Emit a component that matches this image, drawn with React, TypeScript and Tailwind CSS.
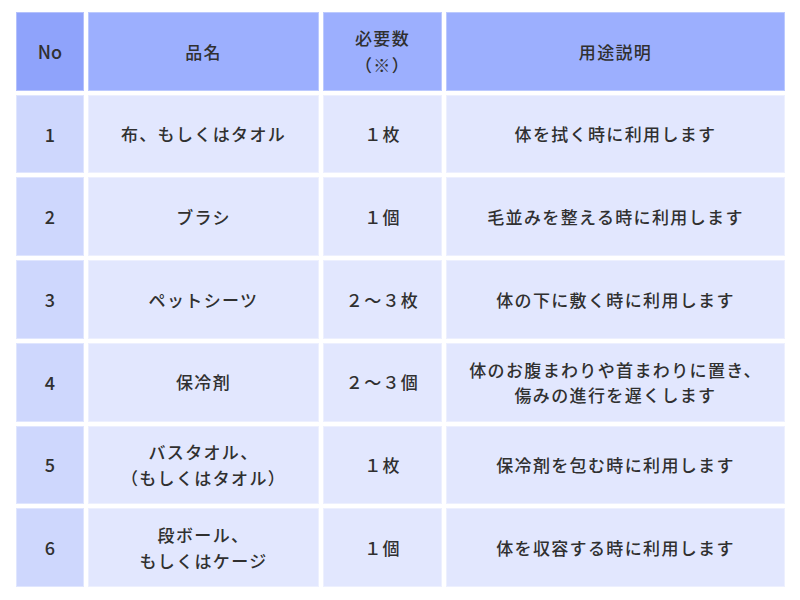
import React from "react";

const rows: { no: string; name: string[]; qty: string; use: string[] }[] = [
  { no: "1", name: ["布、もしくはタオル"], qty: "１枚", use: ["体を拭く時に利用します"] },
  { no: "2", name: ["ブラシ"], qty: "１個", use: ["毛並みを整える時に利用します"] },
  { no: "3", name: ["ペットシーツ"], qty: "２〜３枚", use: ["体の下に敷く時に利用します"] },
  { no: "4", name: ["保冷剤"], qty: "２〜３個", use: ["体のお腹まわりや首まわりに置き、", "傷みの進行を遅くします"] },
  { no: "5", name: ["バスタオル、", "（もしくはタオル）"], qty: "１枚", use: ["保冷剤を包む時に利用します"] },
  { no: "6", name: ["段ボール、", "もしくはケージ"], qty: "１個", use: ["体を収容する時に利用します"] },
];

function Lines({ lines }: { lines: string[] }) {
  return (
    <div className="text-center">
      {lines.map((l, i) => (
        <div key={i}>{l}</div>
      ))}
    </div>
  );
}

export default function App() {
  const cell = "flex items-center justify-center";
  return (
    <div
      className="w-[800px] h-[600px] bg-white pt-[12px] pl-[16px] text-[#303030] text-[17px] leading-[1.5] tracking-[0.08em] font-medium"
      style={{ fontFamily: '"Noto Sans CJK JP", "Noto Sans", sans-serif' }}
    >
      <div className="grid w-[769px] h-[575px] grid-cols-[68px_231px_119px_339px] grid-rows-[repeat(7,1fr)] gap-[4px]">
        <div className={`${cell} bg-[#8fa3fb] border border-[#b4c1fc] text-[18px] tracking-normal`}>No</div>
        <div className={`${cell} bg-[#9caffe] border border-[#bccafe]`}>品名</div>
        <div className={`${cell} bg-[#9caffe] border border-[#bccafe]`}>
          <div className="text-center leading-[1.6]">
            <div>必要数</div>
            <div>（※）</div>
          </div>
        </div>
        <div className={`${cell} bg-[#9caffe] border border-[#bccafe]`}>用途説明</div>
        {rows.map((r) => (
          <React.Fragment key={r.no}>
            <div className={`${cell} bg-[#ced7fd] border border-[#e0e6fe] text-[18px] tracking-normal`}>{r.no}</div>
            <div className={`${cell} bg-[#e2e7fe] border border-[#edf0fe]`}>
              <Lines lines={r.name} />
            </div>
            <div className={`${cell} bg-[#e2e7fe] border border-[#edf0fe]`}>{r.qty}</div>
            <div className={`${cell} bg-[#e2e7fe] border border-[#edf0fe]`}>
              <Lines lines={r.use} />
            </div>
          </React.Fragment>
        ))}
      </div>
    </div>
  );
}
